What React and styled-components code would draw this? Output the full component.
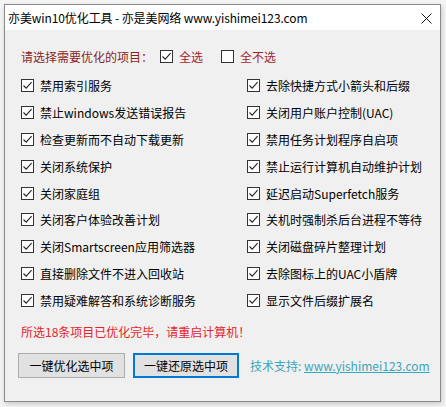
import React from "react";
import styled, { createGlobalStyle } from "styled-components";

const Global = createGlobalStyle`
  html, body { margin: 0; padding: 0; background: #f4f4f4; }
  body { font-family: "Noto Sans CJK SC", "Noto Sans", sans-serif; font-size: 12px; }
  * { box-sizing: border-box; }
`;

const Screen = styled.div`
  padding: 4px 0 0 4px;
  width: 446px;
  height: 407px;
`;

const Window = styled.div`
  width: 437px;
  height: 398px;
  border: 1px solid #8a8a8a;
  background: #f0f0f0;
  box-shadow: 1px 2px 5px rgba(0, 0, 0, 0.18);
  display: flex;
  flex-direction: column;
`;

const TitleBar = styled.div`
  height: 25px;
  background: #ffffff;
  display: flex;
  align-items: center;
  justify-content: space-between;
  padding: 0 8px 0 3px;
  color: #000;
  font-size: 12px;
  line-height: 1;
`;

const TitleText = styled.span`
  white-space: nowrap;
  letter-spacing: -0.1px;
`;

const Close = styled.svg`
  width: 11px;
  height: 11px;
  margin-top: 1px;
`;

const Body = styled.div`
  padding: 18px 0 0 16px;
  display: flex;
  flex-direction: column;
`;

const Header = styled.div`
  display: flex;
  align-items: center;
  height: 16px;
  color: ${(p) => p.$color || "#8b1f1f"};
`;

const HeaderLabel = styled.span`
  margin-right: 7px;
  white-space: nowrap;
`;

const Option = styled.label`
  display: flex;
  align-items: center;
  gap: 6px;
  margin-right: ${(p) => p.$mr || 0}px;
  color: #a4262c;
  white-space: nowrap;
`;

const Box = styled.span`
  width: 13px;
  height: 13px;
  border: 1px solid #333;
  background: #fff;
  display: inline-flex;
  align-items: center;
  justify-content: center;
  flex: none;
`;

const Grid = styled.div`
  margin-top: 8px;
  display: grid;
  grid-template-columns: 226px 1fr;
  grid-auto-rows: 26.9px;
`;

const Item = styled.div`
  display: flex;
  align-items: center;
  gap: 6px;
  color: #000;
  white-space: nowrap;
`;

const Message = styled.div`
  margin-top: 9px;
  height: 16px;
  display: flex;
  align-items: center;
  color: #e8232a;
  white-space: nowrap;
`;

const ButtonRow = styled.div`
  margin: 14px 0 0 -3px;
  display: flex;
  align-items: center;
`;

const Button = styled.button`
  height: 25px;
  width: ${(p) => p.$w}px;
  margin-right: ${(p) => p.$mr}px;
  background: #e1e1e1;
  border: ${(p) => (p.$focus ? "2px solid #0078d7" : "1px solid #adadad")};
  font-family: inherit;
  font-size: 12px;
  color: #000;
  padding: 0;
  display: flex;
  align-items: center;
  justify-content: center;
`;

const Support = styled.span`
  color: #3aa6b9;
  white-space: nowrap;
`;

const Link = styled.a`
  color: #3aa6b9;
  text-decoration: underline;
`;

const Check = () => (
  <svg width="11" height="11" viewBox="0 0 11 11">
    <path d="M1.5 5.5 L4.2 8.2 L9.6 2.2" fill="none" stroke="#222" strokeWidth="1.1" />
  </svg>
);

const CheckBox = ({ checked }) => <Box>{checked && <Check />}</Box>;

const left = [
  "禁用索引服务",
  "禁止windows发送错误报告",
  "检查更新而不自动下载更新",
  "关闭系统保护",
  "关闭家庭组",
  "关闭客户体验改善计划",
  "关闭Smartscreen应用筛选器",
  "直接删除文件不进入回收站",
  "禁用疑难解答和系统诊断服务",
];
const right = [
  "去除快捷方式小箭头和后缀",
  "关闭用户账户控制(UAC)",
  "禁用任务计划程序自启项",
  "禁止运行计算机自动维护计划",
  "延迟启动Superfetch服务",
  "关机时强制杀后台进程不等待",
  "关闭磁盘碎片整理计划",
  "去除图标上的UAC小盾牌",
  "显示文件后缀扩展名",
];

export default function App() {
  const items = [];
  left.forEach((l, i) => {
    items.push(l, right[i]);
  });
  return (
    <Screen>
      <Global />
      <Window>
        <TitleBar>
          <TitleText>亦美win10优化工具 - 亦是美网络 www.yishimei123.com</TitleText>
          <Close viewBox="0 0 11 11">
            <path d="M0.5 0.5 L10.5 10.5 M10.5 0.5 L0.5 10.5" stroke="#111" strokeWidth="1" />
          </Close>
        </TitleBar>
        <Body>
          <Header>
            <HeaderLabel>请选择需要优化的项目：</HeaderLabel>
            <Option $mr={18}>
              <CheckBox checked />
              全选
            </Option>
            <Option>
              <CheckBox />
              全不选
            </Option>
          </Header>
          <Grid>
            {items.map((t) => (
              <Item key={t}>
                <CheckBox checked />
                {t}
              </Item>
            ))}
          </Grid>
          <Message>所选18条项目已优化完毕，请重启计算机！</Message>
          <ButtonRow>
            <Button $w={107} $mr={8}>一键优化选中项</Button>
            <Button $w={106} $mr={11} $focus>一键还原选中项</Button>
            <Support>
              技术支持: <Link href="#">www.yishimei123.com</Link>
            </Support>
          </ButtonRow>
        </Body>
      </Window>
    </Screen>
  );
}
